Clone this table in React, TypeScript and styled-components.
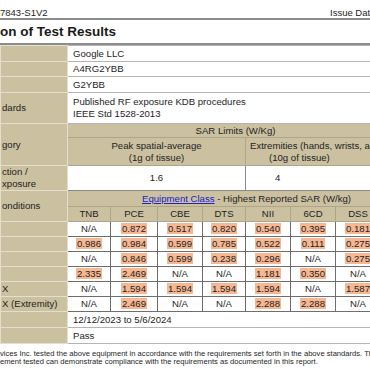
import React from 'react';
import styled, { createGlobalStyle } from 'styled-components';

const GlobalStyle = createGlobalStyle`
  body {
    margin: 0;
    background: #ffffff;
    font-family: "Liberation Sans", Arial, sans-serif;
    overflow: hidden;
  }
`;

const Page = styled.div`
  width: 370px;
  height: 370px;
  overflow: hidden;
`;

const Sheet = styled.div`
  width: 430px;
`;

const TopBar = styled.div`
  display: flex;
  justify-content: space-between;
  height: 11px;
  padding-top: 7px;
  font-size: 9.5px;
  line-height: 11px;
  color: #1e1e1e;
  border-bottom: 2px solid #8c8c8c;
`;

const IssueDate = styled.span`
  width: 100px;
`;

const Title = styled.h1`
  margin: 0;
  height: 16px;
  padding: 4px 0 3px 0;
  font-size: 13.5px;
  line-height: 16px;
  font-weight: bold;
  color: #1a1a1a;
  border-bottom: 2px solid #8c8c8c;
`;

const Grid = styled.table`
  border-collapse: collapse;
  table-layout: fixed;
  width: 425px;
  font-size: 9.6px;
  line-height: 12px;
  color: #1e1e1e;
`;

const Row = styled.tr<{ $h: number }>`
  height: ${p => p.$h}px;
`;

const Label = styled.td`
  background: #cbc1a1;
  text-align: left;
  padding: 0 0 0 1px;
  border: 1px solid #e4dece;
  white-space: nowrap;
  overflow: hidden;
`;

const Value = styled.td`
  padding: 0 0 0 5px;
  text-align: left;
  border: 1px solid #b4b4b4;
  white-space: nowrap;
  overflow: hidden;
`;

const Head = styled.td<{ $shift?: number }>`
  background: #cbc1a1;
  text-align: center;
  padding: 0 ${p => p.$shift ?? 0}px 0 0;
  border: 1px solid #aea68a;
  white-space: nowrap;
  overflow: hidden;
`;

const HeadLine = styled.div<{ $indent: number }>`
  text-align: left;
  padding-left: ${p => p.$indent}px;
`;

const Limit = styled.td<{ $indent?: number }>`
  text-align: ${p => (p.$indent === undefined ? 'center' : 'left')};
  padding: 0 0 0 ${p => p.$indent ?? 0}px;
  border: 1px solid #8a8a8a;
`;

const Cell = styled.td`
  text-align: center;
  padding: 0;
  border: 1px solid #6e6e6e;
  white-space: nowrap;
`;

const Mark = styled.span`
  background: #f6b893;
  padding: 0 1px;
`;

const ClassLink = styled.a`
  color: #2020c8;
  text-decoration: underline;
`;

const Footer = styled.div`
  margin-top: 6px;
  font-size: 7.6px;
  line-height: 8px;
  color: #1e1e1e;
  white-space: nowrap;
`;

const cols = [67, 43, 47, 45, 43, 45, 45, 45, 45];
const bands = ['TNB', 'PCE', 'CBE', 'DTS', 'NII', '6CD', 'DSS', 'LTE'];

// '*' marks a value shaded in the report
const sar: { label: string; values: string[] }[] = [
  { label: '', values: ['N/A', '0.872*', '0.517*', '0.820*', '0.540*', '0.395*', '0.181*', 'N/A'] },
  { label: '', values: ['0.986*', '0.984*', '0.599*', '0.785*', '0.522*', '0.111*', '0.275*', 'N/A'] },
  { label: '', values: ['N/A', '0.846*', '0.599*', '0.238*', '0.296*', 'N/A', '0.275*', 'N/A'] },
  { label: '', values: ['2.335*', '2.469*', 'N/A', 'N/A', '1.181*', '0.350*', 'N/A', 'N/A'] },
  { label: 'X', values: ['N/A', '1.594*', '1.594*', '1.594*', '1.594*', 'N/A', '1.587*', 'N/A'] },
  { label: 'X (Extremity)', values: ['N/A', '2.469*', 'N/A', 'N/A', '2.288*', '2.288*', 'N/A', 'N/A'] },
];

const SarValue: React.FC<{ v: string }> = ({ v }) =>
  v.endsWith('*') ? <Mark>{v.slice(0, -1)}</Mark> : <>{v}</>;

const App: React.FC = () => {
  return (
    <Page>
      <GlobalStyle />
      <Sheet>
        <TopBar>
          <span>7843-S1V2</span>
          <IssueDate>Issue Date</IssueDate>
        </TopBar>
        <Title>on of Test Results</Title>
        <Grid>
          <colgroup>
            {cols.map((w, i) => <col key={i} style={{ width: w }} />)}
          </colgroup>
          <tbody>
            <Row $h={16}>
              <Label />
              <Value colSpan={8}>Google LLC</Value>
            </Row>
            <Row $h={15}>
              <Label />
              <Value colSpan={8}>A4RG2YBB</Value>
            </Row>
            <Row $h={16}>
              <Label />
              <Value colSpan={8}>G2YBB</Value>
            </Row>
            <Row $h={31}>
              <Label>dards</Label>
              <Value colSpan={8}>
                Published RF exposure KDB procedures<br />IEEE Std 1528-2013
              </Value>
            </Row>
            <Row $h={14}>
              <Label rowSpan={2}>gory</Label>
              <Head colSpan={8} $shift={22}>SAR Limits (W/Kg)</Head>
            </Row>
            <Row $h={28}>
              <Head colSpan={4}>Peak spatial-average<br />(1g of tissue)</Head>
              <Head colSpan={4}>
                <HeadLine $indent={4}>Extremities (hands, wrists, ankles, feet)</HeadLine>
                <HeadLine $indent={23}>(10g of tissue)</HeadLine>
              </Head>
            </Row>
            <Row $h={24}>
              <Label>ction /<br />xposure</Label>
              <Limit colSpan={4}>1.6</Limit>
              <Limit colSpan={4} $indent={29}>4</Limit>
            </Row>
            <Row $h={16}>
              <Label rowSpan={2}>onditions</Label>
              <Head colSpan={8}>
                <ClassLink href="#">Equipment Class</ClassLink> - Highest Reported SAR (W/kg)
              </Head>
            </Row>
            <Row $h={15}>
              {bands.map(b => <Head key={b}>{b}</Head>)}
            </Row>
            {sar.map((r, i) => (
              <Row $h={15} key={i}>
                <Label>{r.label}</Label>
                {r.values.map((v, j) => (
                  <Cell key={j}><SarValue v={v} /></Cell>
                ))}
              </Row>
            ))}
            <Row $h={16}>
              <Label />
              <Value colSpan={8}>12/12/2023 to 5/6/2024</Value>
            </Row>
            <Row $h={16}>
              <Label />
              <Value colSpan={8}>Pass</Value>
            </Row>
          </tbody>
        </Grid>
        <Footer>
          vices Inc. tested the above equipment in accordance with the requirements set forth in the above standards. The test results
          <br />
          ement tested can demonstrate compliance with the requirements as documented in this report.
        </Footer>
      </Sheet>
    </Page>
  );
};

export default App;
